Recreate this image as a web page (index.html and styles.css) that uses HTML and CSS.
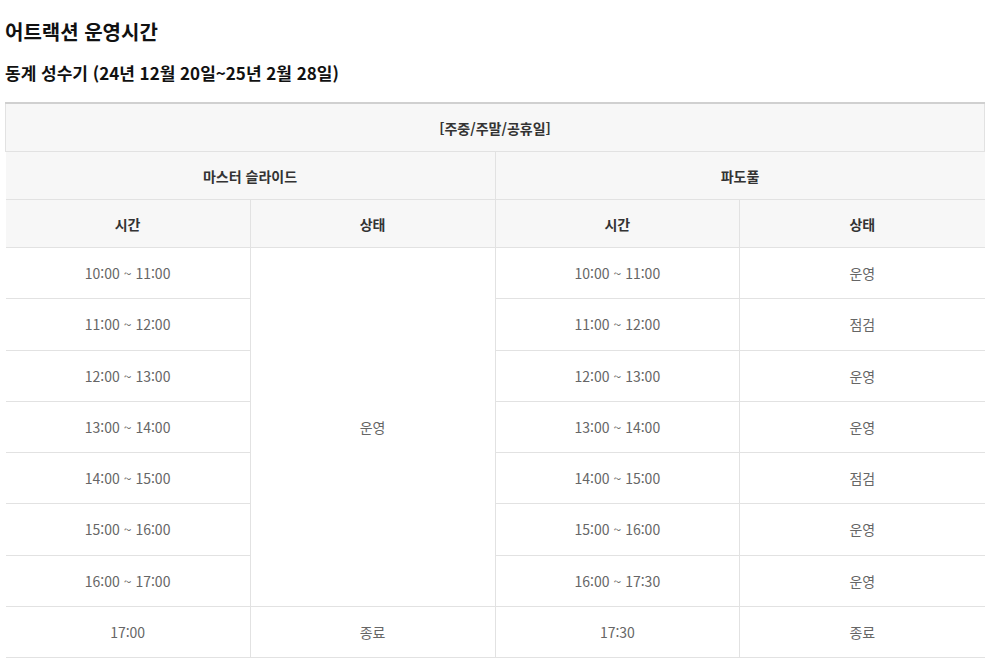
FILE: index.html
```html
<!DOCTYPE html>
<html lang="ko">
<head>
<meta charset="utf-8">
<link rel="stylesheet" href="styles.css">
</head>
<body>
<div class="page">
  <h2 class="title">어트랙션 운영시간</h2>
  <h3 class="subtitle">동계 성수기 (24년 12월 20일~25년 2월 28일)</h3>
  <table class="schedule">
    <thead>
      <tr><th colspan="4" class="h1">[주중/주말/공휴일]</th></tr>
      <tr><th colspan="2">마스터 슬라이드</th><th colspan="2">파도풀</th></tr>
      <tr><th>시간</th><th>상태</th><th>시간</th><th>상태</th></tr>
    </thead>
    <tbody>
      <tr><td>10:00 ~ 11:00</td><td rowspan="7">운영</td><td>10:00 ~ 11:00</td><td>운영</td></tr>
      <tr><td>11:00 ~ 12:00</td><td>11:00 ~ 12:00</td><td>점검</td></tr>
      <tr><td>12:00 ~ 13:00</td><td>12:00 ~ 13:00</td><td>운영</td></tr>
      <tr><td>13:00 ~ 14:00</td><td>13:00 ~ 14:00</td><td>운영</td></tr>
      <tr><td>14:00 ~ 15:00</td><td>14:00 ~ 15:00</td><td>점검</td></tr>
      <tr><td>15:00 ~ 16:00</td><td>15:00 ~ 16:00</td><td>운영</td></tr>
      <tr><td>16:00 ~ 17:00</td><td>16:00 ~ 17:30</td><td>운영</td></tr>
      <tr><td>17:00</td><td>종료</td><td>17:30</td><td>종료</td></tr>
    </tbody>
  </table>
</div>
</body>
</html>
```
FILE: styles.css
```css
html, body {
  margin: 0;
  padding: 0;
  background: #fff;
}
body {
  font-family: "Noto Sans CJK KR", "Noto Sans", sans-serif;
  color: #222;
}
.page {
  padding: 14px 6px 0 5px;
}
.title {
  margin: 0;
  font-size: 20px;
  font-weight: 700;
  line-height: 36px;
  color: #111;
}
.subtitle {
  margin: 9px 0 0;
  font-size: 17px;
  font-weight: 700;
  line-height: 28px;
  color: #111;
}
.schedule {
  margin-top: 15px;
  width: 980px;
  border-collapse: collapse;
  table-layout: fixed;
  border-top: 2px solid #d0d0d0;
}
.schedule th {
  height: 47px;
  padding: 0;
  background: #f7f7f7;
  border: 1px solid #e2e2e2;
  font-size: 14px;
  font-weight: 700;
  color: #333;
  text-align: center;
}
.schedule th.h1 {
  border-top: 0;
}
.schedule td {
  height: 50.25px;
  padding: 0;
  border: 1px solid #e2e2e2;
  font-size: 14px;
  font-weight: 400;
  color: #666;
  text-align: center;
}
.schedule tr > :first-child {
  border-left: 0;
}
.schedule tr > :last-child {
  border-right: 0;
}
.schedule th.h1 {
  border-left: 1px solid #e2e2e2;
  border-right: 1px solid #e2e2e2;
}
```
